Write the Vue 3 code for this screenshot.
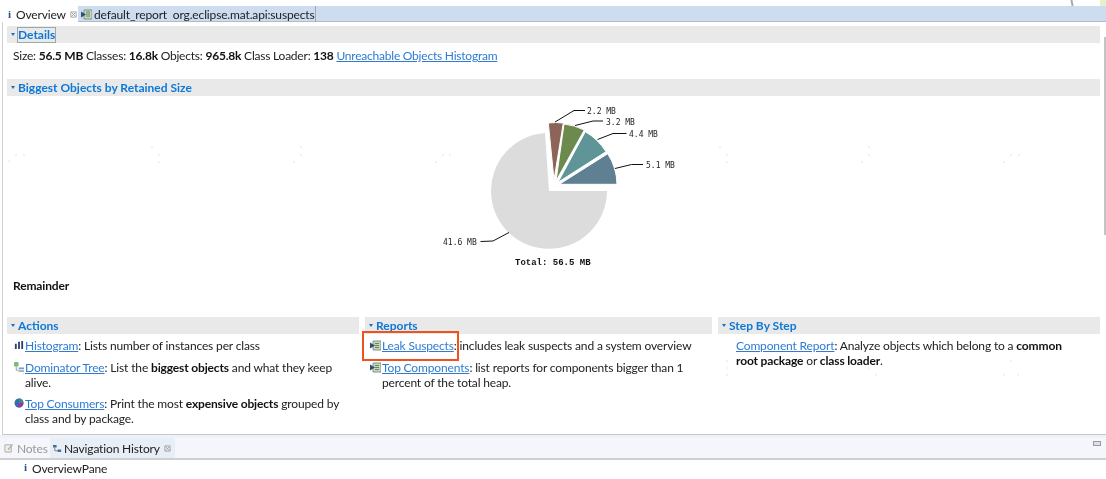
<script setup>
const specks = [
  [8,160],[15,154],[23,154],[151,146],[158,154],[158,161],[300,146],[300,154],[293,161],
  [435,161],[442,154],[449,154],[719,146],[726,154],[726,161],[868,146],[868,154],[861,161],
  [1003,161],[1010,154],[1018,154],[15,359],[22,373],[157,360],[157,366],[300,360],[308,366],
  [593,365],[592,373],[726,360],[726,367],[726,374],[868,367],[875,374],[1010,360],[1003,374],[1017,374],
]
const slices = [
  { d: 'M554 180 L548.300 123 A58 58 0 0 1 563.300 123 Z', fill: '#8c6458' },
  { d: 'M556 181 L564 124 A58 58 0 0 1 584.300 130 Z', fill: '#6c8a4e' },
  { d: 'M558 182.300 L585.300 131.700 A58 58 0 0 1 606 151.700 Z', fill: '#5f9596' },
  { d: 'M559.300 184.300 L607.700 153.700 A58 58 0 0 1 617 184.300 Z', fill: '#5f7f93' },
]
const leaders = [
  'M555 122 L574 110.500 L585 110.500',
  'M575 125.500 L593 121 L603 121',
  'M597.500 139.500 L613 133.500 L626.500 133.500',
  'M615 168.500 L631.500 164.500 L643 164.500',
  'M480.500 241.500 L493 241 L509 232.500',
]
const labels = [
  { x: 587, y: 114, t: '2.2 MB' },
  { x: 606, y: 125, t: '3.2 MB' },
  { x: 629, y: 137, t: '4.4 MB' },
  { x: 646, y: 168, t: '5.1 MB' },
  { x: 443, y: 245, t: '41.6 MB' },
]
</script>

<template>
  <div class="screen">
    <div class="strip"></div>
    <div class="tabbar">
      <div class="tab active">
        <span class="info">i</span>
        <span>Overview</span>
        <svg class="close" viewBox="0 0 8 8" width="7" height="7"><path d="M1 1H7V7H1ZM2 2L6 6M6 2L2 6" fill="none" stroke="#9a9a9a" stroke-width="1"/></svg>
      </div>
      <div class="tab second">
        <svg viewBox="0 0 11 11" width="11" height="11">
          <path d="M3 1H11V10H3Z" fill="#c9d6bf" stroke="#7e9488"/>
          <path d="M5 3H9M5 5H9M5 7H9" stroke="#5f8a5a"/>
          <path d="M0 2.500L5 5.500L0 8.500Z" fill="#2f4f73"/>
        </svg>
        <span>default_report&nbsp; org.eclipse.mat.api:suspects</span>
      </div>
    </div>

    <main class="pane">
      <section class="block">
        <h2 class="head"><i class="caret"></i><span class="focus">Details</span></h2>
        <p class="details">Size: <b>56.5 MB</b> Classes: <b>16.8k</b> Objects: <b>965.8k</b> Class Loader: <b>138</b> <a>Unreachable Objects Histogram</a></p>
      </section>

      <section class="block">
        <h2 class="head"><i class="caret"></i>Biggest Objects by Retained Size</h2>
        <div class="chart"></div>
        <p class="remainder"><b>Remainder</b></p>
      </section>

      <div class="columns">
        <section class="block">
          <h2 class="head"><i class="caret"></i>Actions</h2>
          <div class="item">
            <svg class="ico" viewBox="0 0 11 11" width="10" height="10"><path d="M1 4H3V10H1ZM4.500 2H6.500V10H4.500ZM8 1H10V10H8Z" fill="#2b3f70"/></svg>
            <p><a>Histogram</a>: Lists number of instances per class</p>
          </div>
          <div class="item">
            <svg class="ico" viewBox="0 0 11 11" width="10" height="10"><rect x="0" y="0" width="5" height="5" rx="1" fill="#7fb77e"/><path d="M2.500 5V9H5" fill="none" stroke="#8a9aa8"/><rect x="5" y="6" width="6" height="2" fill="#7b9cc0"/><rect x="5" y="9" width="6" height="2" fill="#9cb3cc"/></svg>
            <p><a>Dominator Tree</a>: List the <b>biggest objects</b> and what they keep alive.</p>
          </div>
          <div class="item">
            <svg class="ico" viewBox="0 0 10 10" width="10" height="10"><circle cx="5" cy="5" r="4.500" fill="#2f6fb0"/><path d="M5 5V0.500A4.500 4.500 0 0 1 9.500 5Z" fill="#3c8a80"/><path d="M5 5H9.500A4.500 4.500 0 0 1 4 9.400Z" fill="#a02fa8"/></svg>
            <p><a>Top Consumers</a>: Print the most <b>expensive objects</b> grouped by class and by package.</p>
          </div>
        </section>
        <section class="block reports">
          <h2 class="head"><i class="caret"></i>Reports</h2>
          <div class="item">
            <svg class="ico" viewBox="0 0 11 11" width="11" height="11"><path d="M3 1H11V10H3Z" fill="#c9d6bf" stroke="#7e9488"/><path d="M5 3.500H9M5 5.500H9M5 7.500H9" stroke="#5f8a5a"/><path d="M0 2.500L5 5.500L0 8.500Z" fill="#2f4f73"/></svg>
            <p><a>Leak Suspects</a>: includes leak suspects and a system overview</p>
          </div>
          <div class="item">
            <svg class="ico" viewBox="0 0 11 11" width="11" height="11"><path d="M3 1H11V10H3Z" fill="#c9d6bf" stroke="#7e9488"/><path d="M5 3.500H9M5 5.500H9M5 7.500H9" stroke="#5f8a5a"/><path d="M0 2.500L5 5.500L0 8.500Z" fill="#2f4f73"/></svg>
            <p><a>Top Components</a>: list reports for components bigger than 1 percent of the total heap.</p>
          </div>
        </section>
        <section class="block steps">
          <h2 class="head"><i class="caret"></i>Step By Step</h2>
          <div class="item">
            <p><a>Component Report</a>: Analyze objects which belong to a <b>common root package</b> or <b>class loader</b>.</p>
          </div>
        </section>
      </div>
    </main>

    <div class="lowerbar">
      <div class="ltab notes">
        <svg viewBox="0 0 11 11" width="10" height="10"><path d="M1 2H8V10H1Z" fill="#eee" stroke="#aaa"/><path d="M4 7L9 1L10 2L5 8Z" fill="#b5b090"/></svg>
        <span>Notes</span>
      </div>
      <div class="ltab hist">
        <svg viewBox="0 0 10 10" width="9" height="9"><path d="M0 1H4V4H0ZM5 6H9V9H5Z" fill="#4b6d8c"/><path d="M2 4V7.500H5" fill="none" stroke="#6a7f92"/></svg>
        <span>Navigation History</span>
        <svg class="close" viewBox="0 0 8 8" width="7" height="7"><path d="M1 1H7V7H1ZM2 2L6 6M6 2L2 6" fill="none" stroke="#9a9a9a" stroke-width="1"/></svg>
      </div>
      <span class="min"></span>
    </div>
    <div class="history">
      <span class="info">i</span>
      <span>OverviewPane</span>
    </div>

    <svg class="pie" viewBox="0 0 1106 479" width="1106" height="479">
      <path d="M545 133 A58 58 0 1 0 607 191 L549 191 Z" fill="#dcdcdc"/>
      <path v-for="s in slices" :key="s.fill" :d="s.d" :fill="s.fill" stroke="#fff" stroke-width="1"/>
      <path v-for="l in leaders" :key="l" :d="l" fill="none" stroke="#111" stroke-width="1"/>
      <text v-for="l in labels" :key="l.t" :x="l.x" :y="l.y" class="lbl">{{ l.t }}</text>
      <text x="515" y="265" class="total">Total: 56.5 MB</text>
    </svg>

    <span v-for="(p, i) in specks" :key="i" class="speck" :style="{ left: p[0] + 'px', top: p[1] + 'px' }"></span>
    <div class="mark"></div>
    <i class="scroll"></i>
    <i class="corner-line"></i>
    <i class="corner-green"></i>
  </div>
</template>

<style>
html, body { margin: 0; padding: 0; background: #fff; overflow: hidden; }
</style>

<style scoped>
.screen {
  position: relative;
  width: 1106px;
  height: 479px;
  display: flex;
  flex-direction: column;
  overflow: hidden;
  background: #fff;
  color: #222;
  font: 12px/15px Lato, "Noto Sans", sans-serif;
  letter-spacing: -0.15px;
  filter: blur(0.35px);
}
p, h2 { margin: 0; }
a { color: #2f7bd2; text-decoration: underline; }
b { font-weight: 700; color: #111; }
.strip { height: 6px; flex: none; }
.tabbar {
  height: 16px;
  flex: none;
  display: flex;
  background: #cddcee;
  border-bottom: 1px solid #aebccc;
  box-sizing: border-box;
}
.tab { display: flex; align-items: center; height: 16px; box-sizing: border-box; white-space: nowrap; }
.tab.active { background: #fff; width: 78px; padding-left: 8px; }
.tab.active .close { margin-left: 4px; }
.tab.second { padding: 0 1px 0 3px; border-right: 1px solid #9aa8b8; gap: 2px; }
.tab.active .info { margin-right: 1px; }
.info {
  font: bold 11px/12px "Liberation Serif", serif;
  color: #2c4f9a;
  width: 7px;
}
.pane {
  flex: none;
  height: 413px;
  box-sizing: border-box;
  margin-left: 2px;
  border-left: 1px solid #d0d0d0;
  border-bottom: 1px solid #c8c8c8;
  padding: 4px 6px 0 4px;
}
.head {
  height: 17px;
  display: flex;
  align-items: center;
  background: #e9e9e9;
  color: #0d78d6;
  font: 700 12px/14px Lato, "Noto Sans", sans-serif;
  letter-spacing: 0;
  padding-left: 4px;
}
.caret {
  width: 0; height: 0;
  border: 2.5px solid transparent;
  border-top: 3px solid #1a6fc0;
  border-bottom: 0;
  margin-right: 3px;
}
.focus { outline: 1px solid #9aa8a8; }
.details { padding: 5px 0 0 6px; height: 31px; letter-spacing: -0.22px; }
.chart { height: 182px; }
.remainder { padding-left: 6px; height: 39px; }
.columns {
  display: grid;
  grid-template-columns: 352px 347px 382px;
  gap: 6px;
}
.item { display: flex; padding: 6.5px 8px 0 7px; }
.head + .item { padding-top: 4px; }
.ico { flex: none; margin: 2px 1px 0 0; }
.reports .item { padding-left: 5px; }
.steps .item { padding-left: 18px; padding-right: 30px; }
.lowerbar {
  height: 25px;
  flex: none;
  box-sizing: border-box;
  background: #f4f6fb;
  border-top: 3px solid #eef1f8;
  border-bottom: 2px solid #cfcfcf;
  display: flex;
  align-items: stretch;
  position: relative;
}
.ltab { display: flex; align-items: center; gap: 3px; white-space: nowrap; }
.notes { color: #999; width: 46px; padding-left: 4px; }
.hist { background: #e8eef6; border-radius: 3px 3px 0 0; padding: 0 4px 0 3px; gap: 2px; }
.hist .close { margin-left: 2px; }
.min {
  position: absolute;
  right: 5px; top: 3px;
  width: 6px; height: 3px;
  background: #dde;
  border: 1px solid #9a9a9a;
}
.history {
  flex: 1;
  display: flex;
  gap: 1px;
  padding: 1px 0 0 24px;
  align-items: flex-start;
}
.pie { position: absolute; left: 0; top: 0; pointer-events: none; }
.lbl { font: 8px "DejaVu Sans Mono", "Liberation Mono", monospace; fill: #222; letter-spacing: 0; }
.total { font: 700 9px "Liberation Mono", monospace; fill: #111; letter-spacing: 0; }
.speck { position: absolute; width: 2px; height: 2px; background: #eee; border-radius: 50%; }
.mark {
  position: absolute;
  left: 362px; top: 331px;
  width: 97px; height: 30px;
  box-sizing: border-box;
  border: 2px solid #f0521e;
}
.scroll { position: absolute; right: 0; top: 37px; width: 2px; height: 198px; background: #c4c4c4; }
.corner-line { position: absolute; left: 1071px; top: 0; width: 2px; height: 6px; background: #aaa; transform: rotate(-12deg); }
.corner-green { position: absolute; right: 0; top: 0; width: 6px; height: 6px; background: #e6f0cf; }
</style>
